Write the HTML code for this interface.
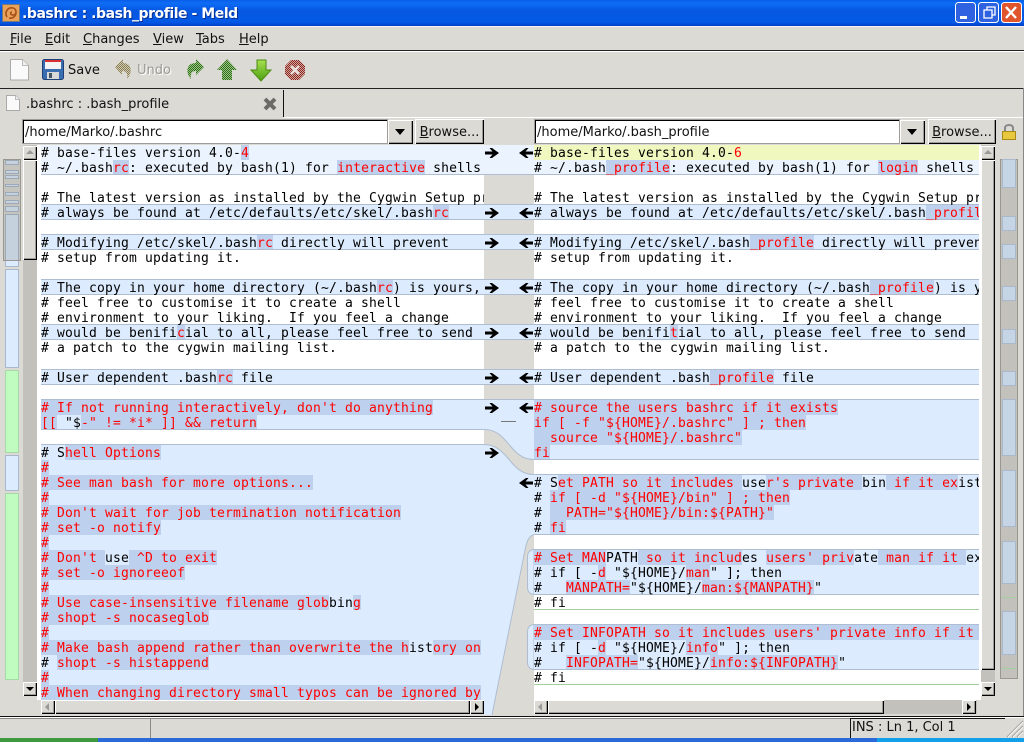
<!DOCTYPE html>
<html><head><meta charset="utf-8"><style>
html,body{margin:0;padding:0;background:#dcdad5;width:1024px;height:742px;overflow:hidden}
.a{position:absolute}
body{font:13px "DejaVu Sans",sans-serif;color:#111}
.pane{position:absolute;top:145px;height:555px;overflow:hidden;background:#fff;font:13px/17px "DejaVu Sans Mono",monospace;letter-spacing:.174px;color:#000}
.pane div{height:15px;white-space:pre}
.b{background:#dcebfd}.p{background:#ebf4fe}.y{background:#f0f8c0}
i{font-style:normal;color:#f00;padding-top:1px;background:linear-gradient(#bdd1ee,#bdd1ee) no-repeat 0 0/100% 15px}
.e i{background-size:100% 14px}
.pane .t{box-shadow:0 -1px 0 #aebdd1}
.pane .e{box-shadow:inset 0 -1px 0 #aebdd1}
.pane .t.e{box-shadow:0 -1px 0 #aebdd1,inset 0 -1px 0 #aebdd1}
.pane .g{box-shadow:inset 0 -1px 0 #a6cf9f}
.btn{position:absolute;background:#dcdad5;box-shadow:inset 1px 1px 0 #fff,inset -1px -1px 0 #000,inset -2px -2px 0 #9d9c98}
.ent{position:absolute;background:#fff;box-shadow:inset 1px 1px 0 #000,0 0 0 1px #9d9c98;height:23px;line-height:25px;font-size:13px;padding-left:2px;color:#111}
.u{text-decoration:underline}
.tr{position:absolute;background:#c3c1bb}
.m{position:absolute;top:32px;line-height:16px}
.bar{position:absolute;box-sizing:border-box;border:1px solid #a9b8cc}
</style></head><body>
<div class="a" style="left:0;top:0;width:1024px;height:26px;background:linear-gradient(#0a5ee6,#0f6cf6 12%,#0658e2 40%,#0459e6 85%,#0040c8)"></div>
<svg class="a" style="left:2px;top:4px" width="18" height="18" viewBox="0 0 18 18"><rect x=".5" y=".5" width="17" height="17" fill="#e8a25a" stroke="#777"/><path d="M5 13C2 8 6 3 11 4c4 1 4 7 0 7-3 0-3-3-1-3M13 5c3 5-1 10-6 9" fill="none" stroke="#a8501c" stroke-width="1.6"/></svg>
<div class="a" style="left:22px;top:6px;color:#fff;font:bold 14px/17px 'DejaVu Sans',sans-serif;letter-spacing:-.45px;text-shadow:1px 1px 0 #0a2f90">.bashrc : .bash_profile - Meld</div>
<svg class="a" style="left:955px;top:2px" width="67" height="22" viewBox="0 0 67 22">
<rect x=".5" y=".5" width="20" height="20" rx="3" fill="#2f62e0" stroke="#fff"/><rect x="5" y="14" width="7" height="3" fill="#fff"/>
<rect x="23.5" y=".5" width="20" height="20" rx="3" fill="#2f62e0" stroke="#fff"/><path d="M29 8h8v8h-8zM32 8V5h8v8h-3" fill="none" stroke="#fff" stroke-width="1.3"/>
<rect x="46.5" y=".5" width="20" height="20" rx="3" fill="#e0552c" stroke="#fff"/><path d="M51 5l10 11M61 5L51 16" stroke="#fff" stroke-width="2.4"/></svg>

<div class="a" style="left:0;top:26px;width:1024px;height:1px;background:#f4f3f0"></div>
<div class="a" style="left:0;top:50px;width:1024px;height:1px;background:#222"></div>
<div class="a" style="left:0;top:51px;width:1024px;height:1px;background:#fff"></div>
<div class="a" style="left:0;top:88px;width:1024px;height:1px;background:#222"></div>
<div class="m" style="left:10px"><span class="u">F</span>ile</div>
<div class="m" style="left:45px"><span class="u">E</span>dit</div>
<div class="m" style="left:83px"><span class="u">C</span>hanges</div>
<div class="m" style="left:153px"><span class="u">V</span>iew</div>
<div class="m" style="left:196px"><span class="u">T</span>abs</div>
<div class="m" style="left:239px"><span class="u">H</span>elp</div>

<svg class="a" style="left:0;top:52px" width="320" height="36" viewBox="0 52 320 36">
<defs>
<pattern id="dg" width="2" height="2" patternUnits="userSpaceOnUse"><rect width="2" height="2" fill="#9cc488"/><rect width="1" height="1" fill="#2f6e18"/><rect x="1" y="1" width="1" height="1" fill="#2f6e18"/></pattern>
<pattern id="dy" width="2" height="2" patternUnits="userSpaceOnUse"><rect width="2" height="2" fill="#cfcab6"/><rect width="1" height="1" fill="#8a7d50"/><rect x="1" y="1" width="1" height="1" fill="#8a7d50"/></pattern>
<pattern id="dr" width="2" height="2" patternUnits="userSpaceOnUse"><rect width="2" height="2" fill="#cfa8a0"/><rect width="1" height="1" fill="#8e2420"/><rect x="1" y="1" width="1" height="1" fill="#8e2420"/></pattern>
<linearGradient id="gd" x1="0" y1="0" x2="0" y2="1"><stop offset="0" stop-color="#a8e050"/><stop offset="1" stop-color="#4ca010"/></linearGradient>
</defs>
<path d="M10.5 59.5h12l6 6v14.500h-18z" fill="#fafafa" stroke="#aaa"/><path d="M22.500 59.500v6h6" fill="#eee" stroke="#bbb"/>
<rect x="42.500" y="59.500" width="21" height="20" rx="2" fill="#3a6cb0" stroke="#1f3f78"/><rect x="45" y="60" width="16" height="9" fill="#f4f4f4"/><rect x="45" y="60" width="16" height="2" fill="#d83030"/><rect x="47" y="72" width="12" height="7" fill="#d8d8d8"/><rect x="49" y="73" width="3" height="5" fill="#456"/>
<path d="M123 59l-8 8 7 8v-4c4 0 6 2 5 8 5-5 6-16-4-16z" fill="url(#dy)"/>
<path d="M196 59l8 8-8 8v-4c-4 0-6 2-5 8-5-5-6-16 5-16z" fill="url(#dg)"/>
<path d="M227 59l10 11h-5v10h-10v-10h-5z" fill="url(#dg)"/>
<path d="M257 60h9v10h5l-10 11-10-11h6z" fill="url(#gd)" stroke="#4a8a10"/>
<path d="M291 60h8l6 6v8l-6 6h-8l-6-6v-8z" fill="url(#dr)"/><path d="M291 66l8 8M299 66l-8 8" stroke="#e8e0dc" stroke-width="2.4"/>
</svg>
<div class="a" style="left:68px;top:63px;line-height:16px">Save</div>
<div class="a" style="left:137px;top:63px;line-height:16px;color:#9c9a94;text-shadow:1px 1px 0 #fff">Undo</div>

<div class="a" style="left:283px;top:90px;width:1px;height:27px;background:#111"></div>
<div class="a" style="left:284px;top:117px;width:740px;height:1px;background:#fff"></div>
<svg class="a" style="left:5px;top:95px" width="16" height="17" viewBox="0 0 16 17"><path d="M1.500.500h9l4 4v11h-13z" fill="#fafafa" stroke="#aaa"/><path d="M10.500.500v4h4" fill="#eee" stroke="#bbb"/></svg>
<div class="a" style="left:26px;top:97px;line-height:16px">.bashrc : .bash_profile</div>
<svg class="a" style="left:262px;top:96px" width="16" height="16" viewBox="0 0 16 16"><path d="M3 3l10 10M13 3L3 13" stroke="#6b6b68" stroke-width="4"/></svg>

<div class="ent" style="left:23px;top:120px;width:362px">/home/Marko/.bashrc</div>
<div class="btn" style="left:388px;top:120px;width:25px;height:24px"></div><div class="a" style="left:395px;top:129px;border:5px solid transparent;border-top:6px solid #000;border-bottom:0"></div>
<div class="btn" style="left:415px;top:119px;width:69px;height:25px;line-height:27px;text-align:center"><span class="u">B</span>rowse...</div>
<div class="ent" style="left:535px;top:120px;width:362px">/home/Marko/.bash_profile</div>
<div class="btn" style="left:900px;top:120px;width:25px;height:24px"></div><div class="a" style="left:907px;top:129px;border:5px solid transparent;border-top:6px solid #000;border-bottom:0"></div>
<div class="btn" style="left:928px;top:119px;width:68px;height:25px;line-height:27px;text-align:center"><span class="u">B</span>rowse...</div>
<svg class="a" style="left:1001px;top:123px" width="16" height="18" viewBox="0 0 16 18"><path d="M4 9V5c0-4 8-4 8 0v4" fill="none" stroke="#888" stroke-width="2"/><rect x="1.500" y="8.500" width="13" height="8" fill="#e8c83c" stroke="#a88a18"/></svg>

<div class="a" style="left:3px;top:145px;width:19px;height:570px;background:#dcdad5"></div>
<div class="a" style="left:37px;top:145px;width:4px;height:555px;background:#fff"></div>
<div class="tr" style="left:23px;top:145px;width:14px;height:551px"></div>
<div class="btn" style="left:23px;top:146px;width:14px;height:14px"></div><div class="a" style="left:26px;top:150px;border:4px solid transparent;border-bottom:4px solid #999;border-top:0"></div>
<div class="btn" style="left:23px;top:160px;width:14px;height:100px"></div>
<div class="btn" style="left:23px;top:682px;width:14px;height:14px"></div><div class="a" style="left:26px;top:687px;border:4px solid transparent;border-top:4px solid #000;border-bottom:0"></div>

<div class="bar" style="left:5px;top:160px;width:14px;height:5px;background:#dcebfd"></div>
<div class="bar" style="left:5px;top:170px;width:14px;height:4px;background:#dcebfd"></div>
<div class="bar" style="left:5px;top:175px;width:14px;height:4px;background:#dcebfd"></div>
<div class="bar" style="left:5px;top:184px;width:14px;height:3px;background:#dcebfd"></div>
<div class="bar" style="left:5px;top:192px;width:14px;height:4px;background:#dcebfd"></div>
<div class="bar" style="left:5px;top:200px;width:14px;height:4px;background:#dcebfd"></div>
<div class="bar" style="left:5px;top:206px;width:14px;height:6px;background:#dcebfd"></div>
<div class="bar" style="left:5px;top:214px;width:14px;height:53px;background:#dcebfd"></div>
<div class="bar" style="left:5px;top:269px;width:14px;height:99px;background:#dcebfd"></div>
<div class="bar" style="left:5px;top:370px;width:14px;height:83px;background:#c0fcc0;border-color:#a8d8a8"></div>
<div class="bar" style="left:5px;top:455px;width:14px;height:36px;background:#dcebfd"></div>
<div class="bar" style="left:5px;top:493px;width:14px;height:187px;background:#c0fcc0;border-color:#a8d8a8"></div>
<div class="a" style="left:3px;top:159px;width:16px;height:100px;border:1px solid #99978f;background:rgba(120,118,110,.22)"></div>

<div class="pane" style="left:41px;width:443px">
<div class="p"># base-files version 4.0-<i>4</i></div>
<div class="p e"># ~/.bash<i>rc</i>: executed by bash(1) for <i>interactive</i> shells</div>
<div></div>
<div># The latest version as installed by the Cygwin Setup program</div>
<div class="b t e"># always be found at /etc/defaults/etc/skel/.bash<i>rc</i></div>
<div></div>
<div class="b t e"># Modifying /etc/skel/.bash<i>rc</i> directly will prevent</div>
<div># setup from updating it.</div>
<div></div>
<div class="b t e"># The copy in your home directory (~/.bash<i>rc</i>) is yours,</div>
<div># feel free to customise it to create a shell</div>
<div># environment to your liking.  If you feel a change</div>
<div class="b t e"># would be benifi<i>c</i>ial to all, please feel free to send</div>
<div># a patch to the cygwin mailing list.</div>
<div></div>
<div class="b t e"># User dependent .bash<i>rc</i> file</div>
<div></div>
<div class="b t"><i># If not running interactively, don't do anything</i></div>
<div class="b e"><i>[[</i> "$<i>-" != *i* ]] &amp;&amp; return</i></div>
<div></div>
<div class="b t"># S<i>hell Options</i></div>
<div class="b"><i>#</i></div>
<div class="b"><i># See man bash for more options...</i></div>
<div class="b"><i>#</i></div>
<div class="b"><i># Don't wait for job termination notification</i></div>
<div class="b"><i># set -o notify</i></div>
<div class="b"><i>#</i></div>
<div class="b"><i># Don't </i>use<i> ^D to exit</i></div>
<div class="b"><i># set -o ignoreeof</i></div>
<div class="b"><i>#</i></div>
<div class="b"><i># Use case-insensitive filename glob</i>bin<i>g</i></div>
<div class="b"><i># shopt -s nocaseglob</i></div>
<div class="b"><i>#</i></div>
<div class="b"><i># Make bash append rather than overwrite the h</i>ist<i>ory on</i></div>
<div class="b"># <i>shopt -s histappend</i></div>
<div class="b"><i>#</i></div>
<div class="b"><i># When changing directory small typos can be ignored by</i></div>
</div>

<svg class="a" style="left:484px;top:145px" width="50" height="570" viewBox="484 145 50 570">
<defs>
<path id="ra" d="M485 151.500H492.500L489.500 148H492L499 153L492 158H489.500L492.500 154.500H485z"/>
<path id="la" d="M533 151.500H525.500L528.500 148H526L519 153L526 158H528.500L525.500 154.500H533z"/>
</defs>
<rect x="484" y="145" width="50" height="570" fill="#dcdad5"/>
<rect x="484" y="145" width="50" height="30" fill="#ebf4fe"/>
<g fill="#dcebfd"><rect x="484" y="205" width="50" height="15"/><rect x="484" y="235" width="50" height="15"/><rect x="484" y="280" width="50" height="15"/><rect x="484" y="325" width="50" height="15"/><rect x="484" y="370" width="50" height="15"/></g>
<g stroke="#aebdd1"><path d="M484 174.500h50M484 204.500h50M484 219.500h50M484 234.500h50M484 249.500h50M484 279.500h50M484 294.500h50M484 324.500h50M484 339.500h50M484 369.500h50M484 384.500h50M484 399.500h50"/></g>
<path d="M484 400H534V460C509 460 509 430 484 430Z" fill="#dcebfd"/>
<path d="M484 429.500C509 429.500 509 459.500 534 459.500" fill="none" stroke="#aebdd1"/>
<path d="M484 445C509 445 509 475 534 475V535C527 537 526 545 524 555L492 715H484Z" fill="#dcebfd"/>
<path d="M484 444.500C509 444.500 509 474.500 534 474.500M534 534.500C527 537 526 545 524 555L492 715" fill="none" stroke="#aebdd1"/>
<path d="M534 549.500H535C530 549.500 527.500 552 527.500 557V587C527.500 592 530 594.500 535 594.500H534Z" fill="#dcebfd" stroke="#aebdd1"/>
<path d="M534 624.500H535C530 624.500 527.500 627 527.500 632V662C527.500 667 530 669.500 535 669.500H534Z" fill="#dcebfd" stroke="#aebdd1"/>
<path d="M501 421.500h15" stroke="#777"/>
<g fill="#000">
<use href="#ra"/><use href="#ra" y="60"/><use href="#ra" y="90"/><use href="#ra" y="135"/><use href="#ra" y="180"/><use href="#ra" y="225"/><use href="#ra" y="255"/><use href="#ra" y="300"/>
<use href="#la"/><use href="#la" y="60"/><use href="#la" y="90"/><use href="#la" y="135"/><use href="#la" y="180"/><use href="#la" y="225"/><use href="#la" y="255"/><use href="#la" y="330"/>
</g>
</svg>

<div class="pane" style="left:534px;width:445px">
<div class="y"># base-files version 4.0-<span style="color:#f00">6</span></div>
<div class="p e"># ~/.bash<i>_profile</i>: executed by bash(1) for <i>login</i> shells</div>
<div></div>
<div># The latest version as installed by the Cygwin Setup program</div>
<div class="b t e"># always be found at /etc/defaults/etc/skel/.bash<i>_profile</i></div>
<div></div>
<div class="b t e"># Modifying /etc/skel/.bash<i>_profile</i> directly will prevent</div>
<div># setup from updating it.</div>
<div></div>
<div class="b t e"># The copy in your home directory (~/.bash<i>_profile</i>) is yours,</div>
<div># feel free to customise it to create a shell</div>
<div># environment to your liking.  If you feel a change</div>
<div class="b t e"># would be benifi<i>t</i>ial to all, please feel free to send</div>
<div># a patch to the cygwin mailing list.</div>
<div></div>
<div class="b t e"># User dependent .bash<i>_profile</i> file</div>
<div></div>
<div class="b t"><i># source the users bashrc if it exists</i></div>
<div class="b"><i>if [ -f "${HOME}/.bashrc" ] ; then</i></div>
<div class="b"><i>  source "${HOME}/.bashrc"</i></div>
<div class="b e"><i>fi</i></div>
<div></div>
<div class="b t"># S<i>et PATH so it includes </i>use<i>r's private </i>bin<i> if it ex</i>ists</div>
<div class="b"># <i>if [ -d "${HOME}/bin" ] ; then</i></div>
<div class="b"># <i>  PATH="${HOME}/bin:${PATH}"</i></div>
<div class="b e"># <i>fi</i></div>
<div></div>
<div class="b t"><i># Set MAN</i>PATH<i> so it includ</i>es <i>users' priv</i>ate<i> man if it </i>exists</div>
<div class="b"># if [ -<i>d</i> "${HOME}/<i>man</i>" ]; then</div>
<div class="b e">#   <i>MANPATH=</i>"${HOME}/<i>man:${MANPATH}</i>"</div>
<div class="g"># fi</div>
<div></div>
<div class="b t"><i># Set INFOPATH so it includes users' private info if it exists</i></div>
<div class="b"># if [ -<i>d</i> "${HOME}/<i>info</i>" ]; then</div>
<div class="b e">#   <i>INFOPATH=</i>"${HOME}/<i>info:${INFOPATH}</i>"</div>
<div class="g"># fi</div>
<div></div>
</div>

<div class="a" style="left:979px;top:145px;width:2px;height:555px;background:#fff"></div>
<div class="tr" style="left:981px;top:145px;width:14px;height:551px"></div>
<div class="btn" style="left:981px;top:146px;width:14px;height:14px"></div><div class="a" style="left:984px;top:150px;border:4px solid transparent;border-bottom:4px solid #999;border-top:0"></div>
<div class="btn" style="left:981px;top:160px;width:14px;height:510px"></div>
<div class="btn" style="left:981px;top:682px;width:14px;height:14px"></div><div class="a" style="left:984px;top:687px;border:4px solid transparent;border-top:4px solid #000;border-bottom:0"></div>

<div class="a" style="left:1000px;top:159px;width:18px;height:520px;box-sizing:border-box;border:1px solid #99978f;background:#c3c1bb"></div>
<div class="bar" style="left:1002px;top:159px;width:14px;height:29px;background:#c5d5e5"></div>
<div class="bar" style="left:1002px;top:216px;width:14px;height:15px;background:#c5d5e5"></div>
<div class="bar" style="left:1002px;top:244px;width:14px;height:15px;background:#c5d5e5"></div>
<div class="bar" style="left:1002px;top:286px;width:14px;height:15px;background:#c5d5e5"></div>
<div class="bar" style="left:1002px;top:329px;width:14px;height:15px;background:#c5d5e5"></div>
<div class="bar" style="left:1002px;top:371px;width:14px;height:15px;background:#c5d5e5"></div>
<div class="bar" style="left:1002px;top:399px;width:14px;height:57px;background:#c5d5e5"></div>
<div class="bar" style="left:1002px;top:470px;width:14px;height:57px;background:#c5d5e5"></div>
<div class="bar" style="left:1002px;top:541px;width:14px;height:43px;background:#c5d5e5"></div>
<div class="a" style="left:1002px;top:597px;width:14px;height:1px;background:#a6cf9f"></div>
<div class="bar" style="left:1002px;top:611px;width:14px;height:44px;background:#c5d5e5"></div>
<div class="a" style="left:1002px;top:668px;width:14px;height:1px;background:#a6cf9f"></div>

<div class="tr" style="left:41px;top:700px;width:443px;height:14px"></div>
<div class="btn" style="left:41px;top:700px;width:14px;height:14px"></div><div class="a" style="left:45px;top:703px;border:4px solid transparent;border-right:4px solid #999;border-left:0"></div>
<div class="btn" style="left:55px;top:700px;width:415px;height:14px"></div>
<div class="btn" style="left:470px;top:700px;width:14px;height:14px"></div><div class="a" style="left:475px;top:703px;border:4px solid transparent;border-left:4px solid #000;border-right:0"></div>
<div class="tr" style="left:534px;top:700px;width:443px;height:14px"></div>
<div class="btn" style="left:534px;top:700px;width:14px;height:14px"></div><div class="a" style="left:538px;top:703px;border:4px solid transparent;border-right:4px solid #999;border-left:0"></div>
<div class="btn" style="left:548px;top:700px;width:336px;height:14px"></div>
<div class="btn" style="left:962px;top:700px;width:14px;height:14px"></div><div class="a" style="left:967px;top:703px;border:4px solid transparent;border-left:4px solid #000;border-right:0"></div>

<div class="a" style="left:1023px;top:88px;width:1px;height:630px;background:#888"></div>
<div class="a" style="left:0;top:716px;width:1024px;height:1px;background:#111"></div>
<div class="a" style="left:0;top:717px;width:1024px;height:1px;background:#fff"></div>
<div class="a" style="left:0;top:718px;width:150px;height:1px;background:#8a8985"></div>
<div class="a" style="left:150px;top:718px;width:1px;height:20px;background:#8a8985"></div>
<div class="a" style="left:150px;top:718px;width:700px;height:1px;background:#8a8985"></div>
<div class="a" style="left:850px;top:718px;width:1px;height:20px;background:#111"></div>
<div class="a" style="left:850px;top:718px;width:155px;height:1px;background:#111"></div>
<div class="a" style="left:852px;top:720px;line-height:16px">INS : Ln 1, Col 1</div>
<svg class="a" style="left:1006px;top:720px" width="18" height="18" viewBox="0 0 18 18"><path d="M1 17L17 1M6 17L17 6M11 17L17 11" stroke="#9d9c98" stroke-width="1.2"/><path d="M2 17L17 2M7 17L17 7M12 17L17 12" stroke="#fff" stroke-width=".8"/></svg>
<div class="a" style="left:0;top:738px;width:1024px;height:4px;background:#2a6ad8"></div>
<div class="a" style="left:0;top:738px;width:98px;height:4px;background:#3f9a3f"></div>
<div class="a" style="left:877px;top:738px;width:147px;height:4px;background:#12a0e8"></div>
</body></html>
